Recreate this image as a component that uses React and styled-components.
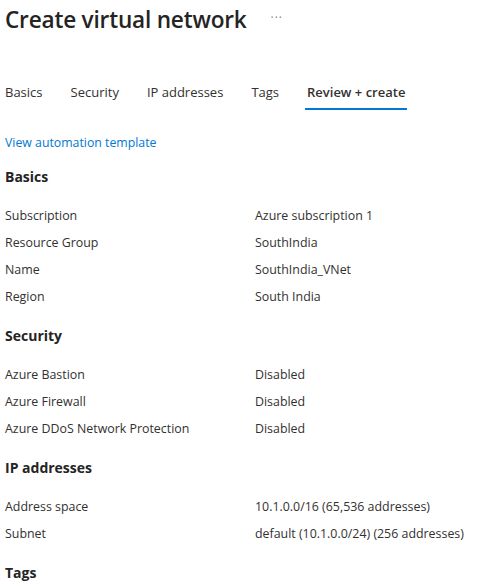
import styled, { createGlobalStyle } from 'styled-components';

const GlobalStyle = createGlobalStyle`
  body {
    margin: 0;
    background: #fff;
    font-family: "Open Sans", "Noto Sans", sans-serif;
    color: #323130;
  }
`;

const Page = styled.main`
  padding: 0 5px;
`;

const TitleBar = styled.header`
  display: flex;
  align-items: center;
  gap: 24px;
  height: 38px;
`;

const Title = styled.h1`
  margin: 0;
  font-size: 22.6px;
  font-weight: 600;
  letter-spacing: -0.2px;
  color: #242424;
`;

const More = styled.span`
  font-size: 12px;
  color: #8a8886;
  letter-spacing: 1px;
  padding-bottom: 4px;
`;

const Tabs = styled.nav`
  display: flex;
  gap: 28px;
  margin-top: 45px;
`;

const Tab = styled.div`
  font-size: 13px;
  font-weight: ${p => (p.$active ? 600 : 400)};
  color: #323130;
  padding: 0 2px 7px;
  margin: 0 -2px;
  border-bottom: 2px solid ${p => (p.$active ? '#0078d4' : 'transparent')};
`;

const Link = styled.a`
  display: block;
  margin-top: 24px;
  font-size: 12.3px;
  color: #0078d4;
  text-decoration: none;
`;

const Section = styled.section`
  margin-top: ${p => (p.$first ? 16 : 11)}px;
`;

const Heading = styled.h2`
  margin: 0 0 21px;
  font-size: 14px;
  font-weight: 700;
  color: #242424;
`;

const Row = styled.div`
  display: grid;
  grid-template-columns: 250px 1fr;
  height: 27px;
  font-size: 12.4px;
  color: #323130;
`;

const sections = [
  {
    title: 'Basics',
    rows: [
      ['Subscription', 'Azure subscription 1'],
      ['Resource Group', 'SouthIndia'],
      ['Name', 'SouthIndia_VNet'],
      ['Region', 'South India'],
    ],
  },
  {
    title: 'Security',
    rows: [
      ['Azure Bastion', 'Disabled'],
      ['Azure Firewall', 'Disabled'],
      ['Azure DDoS Network Protection', 'Disabled'],
    ],
  },
  {
    title: 'IP addresses',
    rows: [
      ['Address space', '10.1.0.0/16 (65,536 addresses)'],
      ['Subnet', 'default (10.1.0.0/24) (256 addresses)'],
    ],
  },
  { title: 'Tags', rows: [] },
];

const tabs = ['Basics', 'Security', 'IP addresses', 'Tags', 'Review + create'];

const App = () => {
  return (
    <Page>
      <GlobalStyle />
      <TitleBar>
        <Title>Create virtual network</Title>
        <More>···</More>
      </TitleBar>
      <Tabs>
        {tabs.map(t => (
          <Tab key={t} $active={t === 'Review + create'}>{t}</Tab>
        ))}
      </Tabs>
      <Link href="#">View automation template</Link>
      {sections.map((s, i) => (
        <Section key={s.title} $first={i === 0}>
          <Heading>{s.title}</Heading>
          {s.rows.map(([k, v]) => (
            <Row key={k}>
              <span>{k}</span>
              <span>{v}</span>
            </Row>
          ))}
        </Section>
      ))}
    </Page>
  );
};

export default App;
